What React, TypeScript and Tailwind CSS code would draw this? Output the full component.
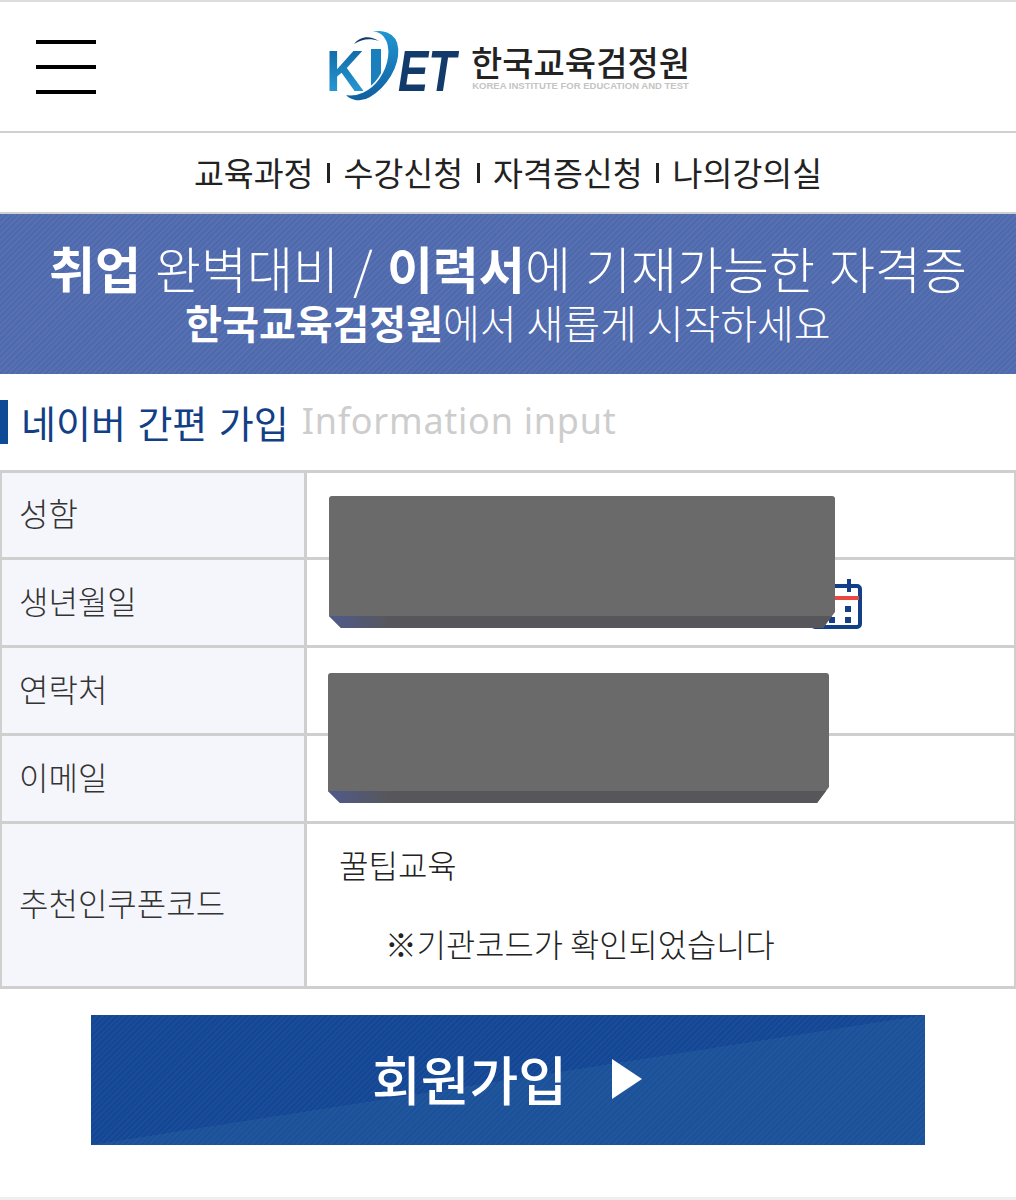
const kr = "font-['Noto_Sans_CJK_KR','Noto_Sans',sans-serif]";

const stripes =
  "bg-[repeating-linear-gradient(135deg,#4f69ad_0px,#4f69ad_2px,#5670b2_2px,#5670b2_4px)]";

function Logo() {
  return (
    <div className="flex items-center gap-[13px]">
      <svg width="132" height="76" viewBox="0 0 132 76" className="overflow-visible">
        <defs>
          <linearGradient id="kiBlue" x1="0" y1="0" x2="0" y2="1">
            <stop offset="0" stopColor="#0d5f9c" />
            <stop offset="1" stopColor="#2ba3de" />
          </linearGradient>
          <linearGradient id="swoosh" x1="0" y1="0" x2="0" y2="1">
            <stop offset="0" stopColor="#2196d3" />
            <stop offset="1" stopColor="#0f5f9f" />
          </linearGradient>
        </defs>
        <text x="0" y="62" fontFamily="Liberation Sans" fontWeight="700" fontSize="58" fill="url(#kiBlue)" textLength="38" lengthAdjust="spacingAndGlyphs">K</text>
        <rect x="45" y="20" width="10" height="42" fill="#1a7fbd" />
        <text x="72" y="62" fontFamily="Liberation Sans" fontWeight="700" fontStyle="italic" fontSize="58" fill="#123a6b" textLength="58" lengthAdjust="spacingAndGlyphs">ET</text>
        <path d="M18 65C30 68 44 62 53 49C62 36 65 18 57 8C53 3 46 3 40 5C54 -3 72 2 73 20C74 38 62 58 44 69C36 74 24 73 18 65Z" fill="url(#swoosh)" stroke="white" strokeWidth="1.5" />
        <path d="M28 15C34 7 44 6 53 12C44 9 36 10 28 15Z" fill="#123a6b" />
      </svg>
      <div className="flex flex-col items-center pt-[2px]">
        <span className={`${kr} text-[34px] leading-[36px] font-medium text-[#222]`}>한국교육검정원</span>
        <span className="font-['Liberation_Sans',sans-serif] text-[9.5px] leading-[12px] font-bold whitespace-nowrap text-[#c4c4c4]">KOREA INSTITUTE FOR EDUCATION AND TEST</span>
      </div>
    </div>
  );
}

function Row({ label, h, children }: { label: string; h: string; children?: React.ReactNode }) {
  return (
    <div className={`flex ${h} border-b-[3px] border-[#cfcfcf]`}>
      <div className={`${kr} flex w-[305px] shrink-0 items-center border-r-[3px] border-[#cfcfcf] bg-[#f5f6fb] pb-[6px] pl-[17px] text-[32px] font-light text-[#333]`}>
        {label}
      </div>
      <div className="flex-1 bg-white">{children}</div>
    </div>
  );
}

function CalendarIcon() {
  return (
    <svg width="54" height="54" viewBox="0 0 54 54">
      <rect x="3" y="8" width="48" height="41" rx="3" fill="white" stroke="#123f86" strokeWidth="4" />
      <rect x="4" y="18" width="46" height="4" fill="#e8483f" />
      <rect x="38" y="1" width="4" height="13" fill="#123f86" />
      <rect x="12" y="1" width="4" height="13" fill="#123f86" />
      <rect x="20" y="28" width="6" height="6" fill="#123f86" />
      <rect x="36" y="28" width="6" height="6" fill="#123f86" />
      <rect x="20" y="39" width="6" height="6" fill="#123f86" />
      <rect x="36" y="39" width="6" height="6" fill="#123f86" />
    </svg>
  );
}

function Redacted({ className }: { className: string }) {
  return (
    <div className={`absolute flex flex-col overflow-hidden rounded-t-[3px] bg-[#6a6a6a] [clip-path:polygon(0_0,100%_0,100%_calc(100%-16px),calc(100%-12px)_100%,12px_100%,0_calc(100%-12px))] ${className}`}>
      <div className="flex-1" />
      <div className="h-[12px] bg-[linear-gradient(90deg,#4f5a8c,#57575b_12%)]" />
    </div>
  );
}

export default function App() {
  return (
    <div className="flex h-[1200px] w-[1016px] flex-col overflow-hidden bg-white">
      {/* header */}
      <header className="relative flex h-[133px] shrink-0 items-center justify-center border-y-[2px] border-[#cfcfcf] border-t-[#dddddd]">
        <div className="absolute left-[36px] top-[38px] flex h-[54px] w-[60px] flex-col justify-between">
          <span className="h-[4px] bg-black" />
          <span className="h-[4px] bg-black" />
          <span className="h-[4px] bg-black" />
        </div>
        <Logo />
      </header>

      {/* nav */}
      <nav className={`${kr} flex h-[81px] shrink-0 items-center justify-center gap-[13.5px] border-b-[2px] border-[#cfcfcf] text-[32.5px] font-normal text-[#222]`}>
        <span>교육과정</span>
        <span className="h-[20px] w-[3px] bg-[#222]" />
        <span>수강신청</span>
        <span className="h-[20px] w-[3px] bg-[#222]" />
        <span>자격증신청</span>
        <span className="h-[20px] w-[3px] bg-[#222]" />
        <span>나의강의실</span>
      </nav>

      {/* banner */}
      <section className={`${kr} ${stripes} flex h-[160px] shrink-0 flex-col items-center justify-center pb-[4px] text-white`}>
        <p className="text-[50px] leading-[60px] font-light [word-spacing:3px] whitespace-nowrap">
          <b className="font-bold">취업</b> 완벽대비 / <b className="font-bold">이력서</b>에 기재가능한 자격증
        </p>
        <p className="text-[40px] leading-[50px] font-light [word-spacing:1px] whitespace-nowrap">
          <b className="font-bold">한국교육검정원</b>에서 새롭게 시작하세요
        </p>
      </section>

      {/* section title */}
      <div className="flex h-[96px] shrink-0 items-center">
        <span className="h-[44px] w-[8px] bg-[#0f4a96]" />
        <span className={`${kr} ml-[13px] -translate-y-[1px] text-[38px] font-normal [word-spacing:3px] text-[#123f86]`}>네이버 간편 가입</span>
        <span className="ml-[13px] -translate-y-[1px] font-['Noto_Sans',sans-serif] text-[36px] tracking-[0.75px] text-[#cdcdcd]">Information input</span>
      </div>

      {/* form table */}
      <div className="relative shrink-0 border-x-[2px] border-t-[3px] border-[#cfcfcf]">
        <Row label="성함" h="h-[87px]" />
        <Row label="생년월일" h="h-[88px]">
          <div className="ml-[502px] pt-[18px]">
            <CalendarIcon />
          </div>
        </Row>
        <Row label="연락처" h="h-[88px]" />
        <Row label="이메일" h="h-[88px]" />
        <Row label="추천인쿠폰코드" h="h-[165px]">
          <div className={`${kr} flex h-full flex-col font-light text-[#222]`}>
            <span className="mt-[16px] ml-[32px] text-[32px] leading-[48px]">꿀팁교육</span>
            <span className="mt-[33px] ml-[78px] text-[31.8px] leading-[44px]">※기관코드가 확인되었습니다</span>
          </div>
        </Row>
        <Redacted className="left-[327px] top-[23px] h-[132px] w-[506px]" />
        <Redacted className="left-[326px] top-[200px] h-[130px] w-[501px]" />
      </div>

      {/* submit */}
      <div className="flex flex-1 justify-center pt-[26px]">
        <button className="flex h-[130px] w-[834px] items-center justify-center gap-[45px] bg-[repeating-linear-gradient(135deg,rgba(255,255,255,0.03)_0px,rgba(255,255,255,0.03)_2px,transparent_2px,transparent_4px),linear-gradient(to_bottom_right,#134694_50%,#1a5199_50%)] pr-[2px] pb-[2px]">
          <span className={`${kr} text-[53px] font-medium text-white`}>회원가입</span>
          <svg width="30" height="40" viewBox="0 0 30 40">
            <polygon points="0,0 30,20 0,40" fill="white" />
          </svg>
        </button>
      </div>
      <div className="h-[3px] shrink-0 bg-[#eeeeee]" />
    </div>
  );
}
